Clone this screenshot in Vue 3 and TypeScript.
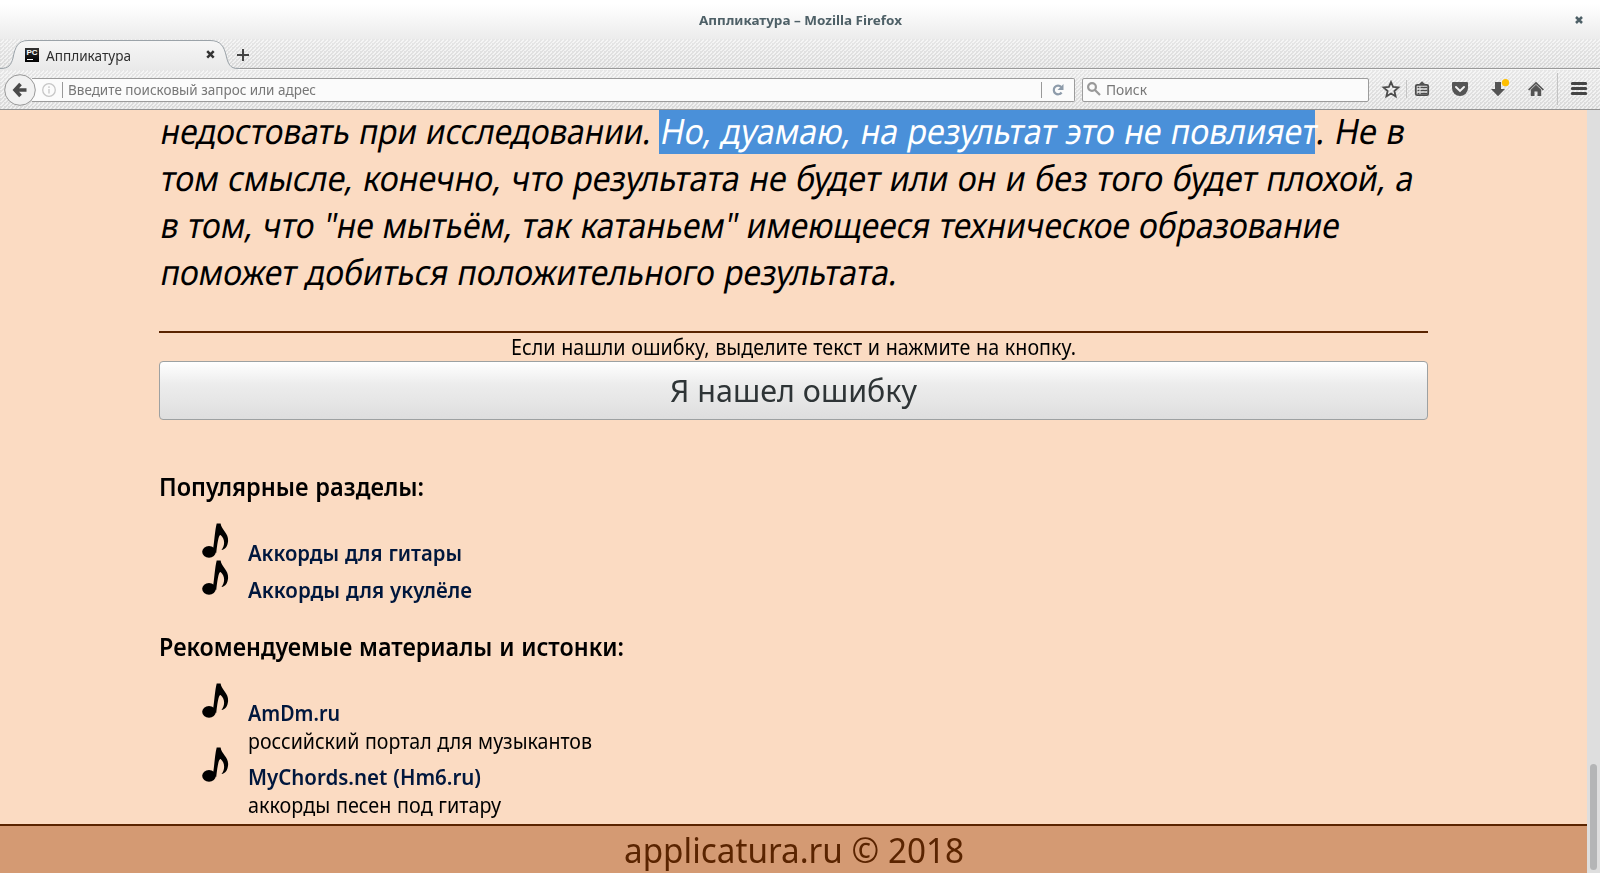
<script setup lang="ts">
import type { Directive } from 'vue'

interface Entry {
  title: string
  width: number
  note?: string
  noteWidth?: number
}

interface Section {
  heading: string
  width: number
  kind: string
  items: Entry[]
}

const sections: Section[] = [
  {
    heading: 'Популярные разделы:',
    width: 265,
    kind: 'short',
    items: [
      { title: 'Аккорды для гитары', width: 214 },
      { title: 'Аккорды для укулёле', width: 224 },
    ],
  },
  {
    heading: 'Рекомендуемые материалы и истонки:',
    width: 465,
    kind: 'tall',
    items: [
      { title: 'AmDm.ru', width: 92, note: 'российский портал для музыкантов', noteWidth: 344 },
      { title: 'MyChords.net (Hm6.ru)', width: 233, note: 'аккорды песен под гитару', noteWidth: 253 },
    ],
  },
]

const lines = [
  { text: 'том смысле, конечно, что результата не будет или он и без того будет плохой, а', width: 1253 },
  { text: 'в том, что "не мытьём, так катаньем" имеющееся техническое образование', width: 1179 },
  { text: 'поможет добиться положительного результата.', width: 737 },
]

// Condenses (or expands) a line of text so that it fills the given width.
// A modifier of "slant" also leans the letters like an italic.
const vFit: Directive<HTMLElement, number> = {
  mounted(el, { value, modifiers }) {
    const natural = el.getBoundingClientRect().width
    el.style.transform = `${modifiers.slant ? 'skewX(-11deg) ' : ''}scaleX(${value / natural})`
    el.style.marginRight = `${value - natural}px`
  },
}
</script>

<template>
  <div class="window">
    <header class="titlebar">
      <span v-fit="203" class="fit">Аппликатура – Mozilla Firefox</span>
      <svg class="win-close" width="8" height="8" viewBox="0 0 8 8"><path d="M1 1l6 6M7 1l-6 6" /></svg>
    </header>

    <div class="tabs">
      <svg class="tab-shape" width="240" height="31" viewBox="0 0 240 31">
        <defs>
          <linearGradient id="tabfill" x1="0" y1="0" x2="0" y2="1">
            <stop offset="0" stop-color="#f6f6f6" /><stop offset="1" stop-color="#e9e9e9" />
          </linearGradient>
        </defs>
        <path class="tab-fill" d="M0 29.5C9 29.5 11 26 13 19C15 8 18 1.500 28 1.500H210C221 1.500 224 8 226 16C228 25 230 29.500 238 29.500V31H0Z" />
        <path class="tab-line" d="M0 29.5C9 29.5 11 26 13 19C15 8 18 1.500 28 1.500H210C221 1.500 224 8 226 16C228 25 230 29.500 238 29.500H240" />
      </svg>
      <div class="tab">
        <span class="favicon">PC<i></i></span>
        <span v-fit="85" class="fit tab-title">Аппликатура</span>
        <svg class="tab-close" width="9" height="9" viewBox="0 0 9 9"><path d="M1.200 1.200l6.500 6.500M7.700 1.200l-6.500 6.500" /></svg>
      </div>
      <svg class="plus" width="12" height="12" viewBox="0 0 12 12"><path d="M6 0v12M0 6h12" /></svg>
    </div>

    <nav class="toolbar">
      <svg class="back" width="32" height="32" viewBox="0 0 32 32">
        <circle cx="16" cy="16" r="15.300" />
        <path d="M16.500 10L11 16l5.500 6M11.500 16H22.500" />
      </svg>
      <div class="field url">
        <svg class="info" width="14" height="14" viewBox="0 0 14 14">
          <circle cx="7" cy="7" r="6.300" /><path d="M7 6v4.500M7 3.300v1.600" />
        </svg>
        <i class="bar"></i>
        <span v-fit="248" class="fit">Введите поисковый запрос или адрес</span>
        <i class="bar right"></i>
        <svg class="reload" width="12" height="12" viewBox="0 0 12 12">
          <path class="arc" d="M9.200 3A4.300 4.300 0 1 0 9.600 8.500" /><path class="tip" d="M11.500 0V6H5.500Z" />
        </svg>
      </div>
      <div class="field search">
        <svg width="14" height="14" viewBox="0 0 14 14"><circle cx="5" cy="5" r="3.900" /><path d="M8 8l5 5" /></svg>
        <span v-fit="41" class="fit">Поиск</span>
      </div>
      <svg class="tools" width="231" height="39" viewBox="1369 70 231 39">
        <path class="line" d="M1391 82l2.100 4.900 5.300.5-4 3.600 1.200 5.300-4.600-2.800-4.600 2.800 1.200-5.300-4-3.600 5.300-.5z" />
        <path class="sep" d="M1406.500 80v18M1557.500 73v32" />
        <rect class="line" x="1415.800" y="84.800" width="12.400" height="10.400" rx="1.500" />
        <path class="solid" d="M1418.500 84.500l3.500-3.200 3.500 3.200z" />
        <path class="rows" d="M1417.500 87.500h2M1420.500 87.500h7M1417.500 90.500h2M1420.500 90.500h7M1417.500 93.500h2M1420.500 93.500h7" />
        <path class="solid" d="M1453 82h14q1 0 1 1v5a8 8 0 0 1-16 0v-5q0-1 1-1z" />
        <path class="chevron" d="M1456 87l4 3.900 4-3.900" />
        <path class="solid" d="M1495 82h6v7h4l-7 7.300-7-7.300h4z" />
        <circle class="dot" cx="1505.500" cy="82.700" r="3.600" />
        <path class="roof" d="M1528.600 90l7.400-7 7.400 7" />
        <path class="solid" d="M1536 84.800l5.200 5V96h-3.700v-4.500h-3V96h-3.700v-6.200z" />
        <path class="menu" d="M1572.300 83.600h13.400M1572.300 88.600h13.400M1572.300 93.600h13.400" />
      </svg>
    </nav>

    <div class="viewport">
      <div class="page">
        <main>
          <p class="quote">
            <span class="row first"><span v-fit.slant="500" class="fit">недостовать при исследовании. </span><span class="marked"><span v-fit.slant="656" class="fit">Но, дуамаю, на результат это не повлияет</span></span><span v-fit.slant="88" class="fit">. Не в</span></span>
            <span v-for="line in lines" :key="line.text" class="row"><span v-fit.slant="line.width" class="fit">{{ line.text }}</span></span>
          </p>
          <div class="report">
            <p><span v-fit="565" class="fit">Если нашли ошибку, выделите текст и нажмите на кнопку.</span></p>
            <button type="button"><span v-fit="247" class="fit">Я нашел ошибку</span></button>
          </div>
          <section v-for="section in sections" :key="section.heading">
            <h2><span v-fit="section.width" class="fit">{{ section.heading }}</span></h2>
            <ul :class="section.kind">
              <li v-for="item in section.items" :key="item.title">
                <svg class="note" width="30" height="38" viewBox="0 0 30 38">
                  <ellipse cx="8" cy="29.800" rx="6.800" ry="5.900" />
                  <path d="M11.800 29C13.400 20 13.900 8 15.700 1.500L19.600 1.500C20.400 8 27.700 11 27.100 19C26.600 24 24.500 27.500 20.500 28C23.900 24 24.400 17 19.600 13C17.900 13 16.900 17 15.200 31Z" />
                </svg>
                <div>
                  <a><span v-fit="item.width" class="fit">{{ item.title }}</span></a>
                  <p v-if="item.note"><span v-fit="item.noteWidth ?? 0" class="fit">{{ item.note }}</span></p>
                </div>
              </li>
            </ul>
          </section>
        </main>
        <footer><span v-fit="340" class="fit">applicatura.ru © 2018</span></footer>
      </div>
      <div class="scrollbar"><i></i></div>
    </div>
  </div>
</template>

<style>
body { margin: 0; overflow: hidden; }
</style>

<style scoped>
.window {
  width: 1600px;
  height: 873px;
  display: flex;
  flex-direction: column;
  overflow: hidden;
  font-family: "Noto Sans", "Open Sans", sans-serif;
  background: #e4e4e4;
}
p, h2, ul { margin: 0; padding: 0; }
svg { display: block; flex: none; }
.fit { display: inline-block; white-space: pre; flex: none; transform-origin: 0 78%; }

.titlebar {
  height: 39px;
  flex: none;
  display: flex;
  align-items: center;
  justify-content: center;
  position: relative;
  background: linear-gradient(#fff 10%, #ececec);
  color: #4e6067;
  font-size: 13px;
  font-weight: 700;
}
.titlebar .fit { padding-top: 1px; }
.win-close { position: absolute; right: 17px; top: 16px; fill: none; stroke: #4e6067; stroke-width: 2.500; }

.tabs,
.toolbar {
  background-image:
    linear-gradient(135deg, transparent 37.500%, #fff9 37.500% 62.500%, transparent 62.500%),
    linear-gradient(#e7e7e7, #dadada);
  background-size: 4px 4px, 100% 100%;
}
.tabs {
  height: 30px;
  flex: none;
  display: flex;
  align-items: center;
  position: relative;
  box-sizing: border-box;
  border-bottom: 1px solid #9a9a9a;
}
.tab-shape { position: absolute; left: 0; top: 0; }
.tab-fill { fill: url(#tabfill); }
.tab-line { fill: none; stroke: #9ba3a9; }
.tab { width: 190px; margin-left: 25px; display: flex; align-items: center; position: relative; padding-top: 3px; }
.favicon {
  width: 14px;
  height: 14px;
  overflow: hidden;
  background: linear-gradient(#333, #000);
  color: #fff;
  font: 700 8px/9px "Liberation Sans", sans-serif;
  text-align: center;
}
.favicon i { display: block; width: 6px; height: 1px; margin: 2px 0 0 2px; background: #fff; }
.tab-title { margin-left: 7px; padding-top: 1px; font-size: 14px; line-height: 20px; color: #2e2e2e; }
.tab-close { margin: -1px 0 0 auto; fill: none; stroke: #333; stroke-width: 2.500; }
.plus { margin: 2px 0 0 22px; position: relative; fill: none; stroke: #444; stroke-width: 2; }

.toolbar {
  height: 41px;
  flex: none;
  box-sizing: border-box;
  display: flex;
  align-items: center;
  border-top: 1px solid #f8f8f8;
  border-bottom: 1px solid #929292;
}
.back { margin-left: 4px; position: relative; }
.back circle { fill: #f1f1f1; stroke: #989898; }
.back path { fill: none; stroke: #4a4a4a; stroke-width: 3.600; }
.field {
  height: 24px;
  box-sizing: border-box;
  display: flex;
  align-items: center;
  border: 1px solid #9c9c9c;
  border-radius: 2px;
  background: #fbfbfb;
  color: #777;
  font-size: 14px;
}
.url { width: 1043px; margin-left: -4px; padding: 0 9px; border-left: 0; border-radius: 0 2px 2px 0; }
.info { margin-left: 1px; fill: none; stroke: #c6c6c6; stroke-width: 1.300; }
.bar { width: 1px; height: 16px; margin: 0 5px 0 6px; background: #999; }
.bar.right { margin: 0 10px 0 auto; }
.reload { margin-right: 1px; }
.reload .arc { fill: none; stroke: #8d9baa; stroke-width: 2.200; }
.reload .tip { fill: #8d9baa; }
.search { width: 287px; margin-left: 7px; padding-left: 4px; }
.search svg { margin: -2px 5px 0 0; fill: none; stroke: #999; stroke-width: 2.200; }
.tools .line { fill: none; stroke: #4c4c4c; stroke-width: 1.800; }
.tools .sep { stroke: #c4c4c4; }
.tools .solid { fill: #545454; }
.tools .rows { stroke: #4c4c4c; stroke-width: 1.300; }
.tools .chevron { fill: none; stroke: #f2f2f2; stroke-width: 2; stroke-linecap: round; }
.tools .dot { fill: #ffbf00; }
.tools .roof { fill: none; stroke: #545454; stroke-width: 1.700; }
.tools .menu { stroke: #454545; stroke-width: 3; stroke-linecap: round; }

.viewport { flex: 1; min-height: 0; display: flex; }
.page { width: 1587px; display: flex; flex-direction: column; background: #fbdbc2; color: #000; }
main { flex: 1; min-height: 0; padding: 0 159px; }
.quote { font-size: 35px; line-height: 47px; word-spacing: 0.030em; }
.row { display: flex; height: 47px; }
.row.first { height: 44px; line-height: 41px; }
.marked { display: flex; background: #4a90d9; color: #fff; }
.report { margin-top: 36px; border-top: 2px solid #5a2400; }
.report p { height: 28px; font-size: 22px; line-height: 27px; text-align: center; word-spacing: 0.030em; }
.report button {
  display: block;
  width: 100%;
  height: 59px;
  padding: 0;
  border: 1px solid #9da1a2;
  border-radius: 4px;
  background: linear-gradient(#fff, #ececec 40%, #e8e8e8 60%, #dedede);
  color: #2e3436;
  font: 31px/57px "Noto Sans", sans-serif;
}
section { margin-top: 33px; }
.report + section { margin-top: 49px; }
h2 { font-size: 25px; font-weight: 650; line-height: 34px; height: 34px; word-spacing: 0.030em; }
ul { margin-top: 19px; padding-left: 42px; list-style: none; }
li { display: flex; gap: 17px; font-size: 22px; line-height: 28px; word-spacing: 0.030em; }
.short li { height: 37px; }
.tall li { height: 64px; }
li div { padding-top: 16px; }
li a { display: block; color: #00173d; font-weight: 650; }
.note { fill: #000; filter: blur(0.700px); }
footer {
  height: 49px;
  flex: none;
  box-sizing: border-box;
  border-top: 2px solid #5a2400;
  background: #d49a73;
  color: #5a2400;
  font-size: 35px;
  line-height: 48px;
  text-align: center;
}
.scrollbar { width: 13px; box-sizing: border-box; padding: 654px 3px 3px; display: flex; background: #dedede; }
.scrollbar i { width: 7px; border-radius: 4px; background: #b4b5b6; }
</style>
